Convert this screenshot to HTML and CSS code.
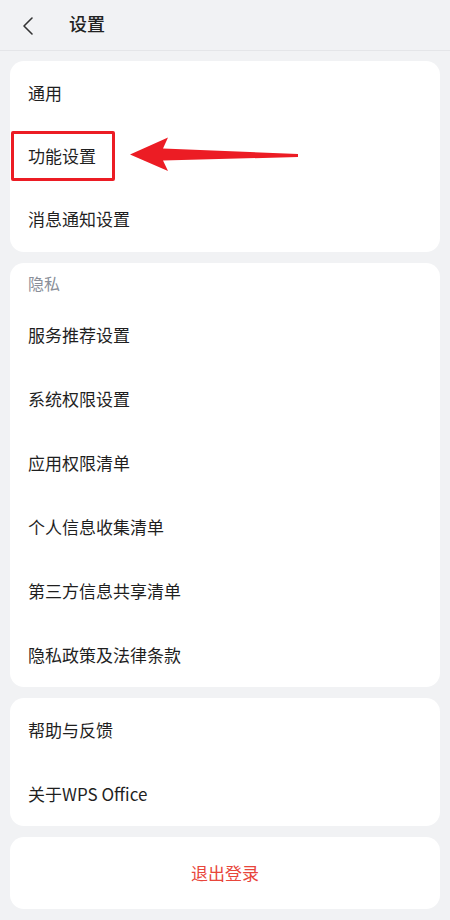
FILE: index.html
```html
<!DOCTYPE html>
<html lang="zh-CN">
<head>
  <meta charset="UTF-8">
  <meta name="viewport" content="width=device-width, initial-scale=1.0">
  <title>设置</title>
  <link rel="stylesheet" href="styles.css">
</head>
<body>
  <div class="header">
    <svg class="back" width="12" height="20" viewBox="0 0 12 20">
      <path d="M10 2 L2 10 L10 18" fill="none" stroke="#333" stroke-width="1.6" stroke-linecap="round" stroke-linejoin="round"/>
    </svg>
    <h1>设置</h1>
  </div>

  <div class="content">
    <div class="card first">
      <div class="row">通用</div>
      <div class="row">功能设置</div>
      <div class="row">消息通知设置</div>
      <div class="mark-box"></div>
      <svg class="mark-arrow" width="172" height="38" viewBox="128 135 172 38">
        <polygon points="130,154.5 168,137.5 163,148.5 298,154 298,157 163,160.5 168,171" fill="#ec1c24"/>
      </svg>
    </div>

    <div class="card">
      <div class="section-title">隐私</div>
      <div class="row">服务推荐设置</div>
      <div class="row">系统权限设置</div>
      <div class="row">应用权限清单</div>
      <div class="row">个人信息收集清单</div>
      <div class="row">第三方信息共享清单</div>
      <div class="row">隐私政策及法律条款</div>
    </div>

    <div class="card">
      <div class="row">帮助与反馈</div>
      <div class="row">关于WPS Office</div>
    </div>

    <div class="card logout">退出登录</div>
  </div>
</body>
</html>
```

FILE: styles.css
```css
* {
  box-sizing: border-box;
  margin: 0;
  padding: 0;
  font-family: "Noto Sans CJK SC", "Noto Sans", sans-serif;
}

body {
  background: #f1f2f4;
  color: #1f1f1f;
  width: 450px;
  height: 920px;
  overflow: hidden;
}

.header {
  height: 51px;
  display: flex;
  align-items: center;
  border-bottom: 1px solid #e4e5e8;
  padding-left: 22px;
}

.back {
  display: block;
  margin-top: 1px;
}

.header h1 {
  font-size: 18px;
  font-weight: 500;
  color: #222;
  margin-left: 35px;
  margin-top: -4px;
}

.content {
  padding: 10px 10px 0;
  display: flex;
  flex-direction: column;
  gap: 11px;
}

.card {
  background: #fff;
  border-radius: 14px;
  position: relative;
}

.card.first {
  padding: 1px 0;
}

.card.first .row {
  height: 63px;
}

.row {
  height: 64px;
  display: flex;
  align-items: center;
  padding-left: 18px;
  padding-bottom: 2px;
  font-size: 17px;
  color: #1f1f1f;
}

.section-title {
  height: 40px;
  display: flex;
  align-items: center;
  padding-left: 18px;
  padding-bottom: 1px;
  font-size: 16px;
  color: #8a8f99;
}

.logout {
  height: 72px;
  display: flex;
  align-items: center;
  justify-content: center;
  padding-bottom: 2px;
  font-size: 17px;
  color: #e8463b;
}

.mark-box {
  position: absolute;
  left: 1px;
  top: 70px;
  width: 104px;
  height: 50px;
  border: 3px solid #ec1c24;
  border-radius: 2px;
}

.mark-arrow {
  position: absolute;
  left: 118px;
  top: 74px;
}
```
